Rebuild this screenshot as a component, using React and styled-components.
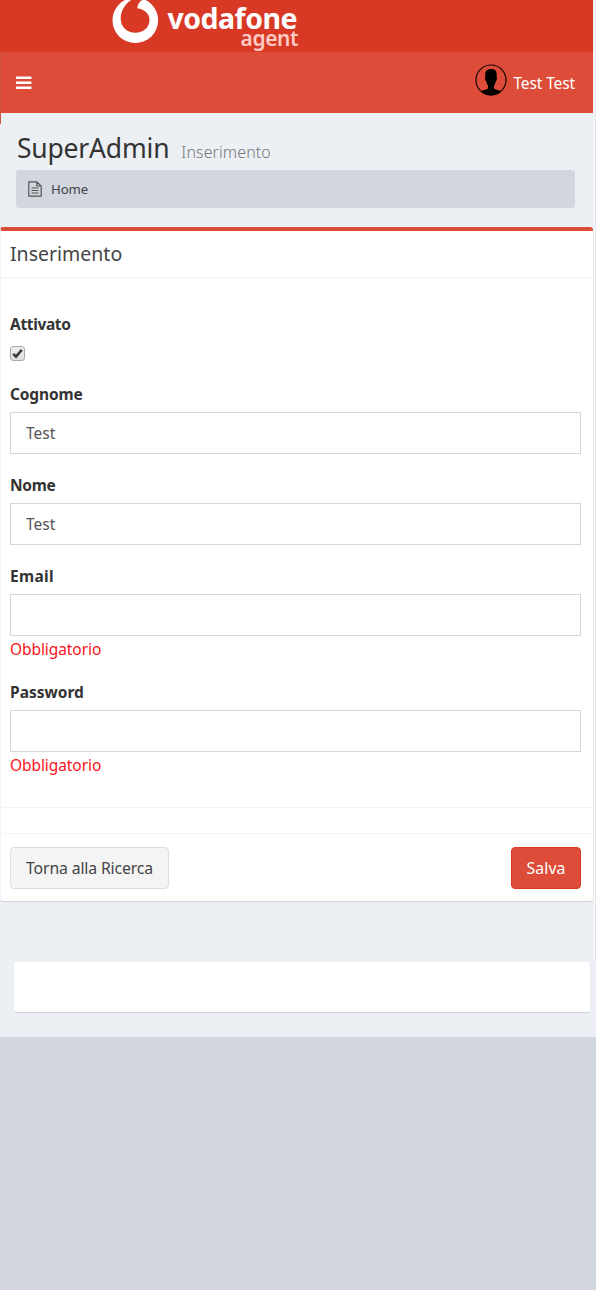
import React from "react";
import styled, { createGlobalStyle } from "styled-components";

const Global = createGlobalStyle`
  *, *::before, *::after { box-sizing: border-box; }
  body { margin: 0; background: #d2d6df; font-family: "Noto Sans", "Open Sans", sans-serif; color: #333; }
  h1, h2, p { margin: 0; font-weight: 400; }
  button, input { font-family: inherit; }
`;

const Page = styled.div`
  width: 596px;
  height: 1290px;
  overflow: hidden;
  background: #d2d6df;
`;
const Shell = styled.div`
  height: 1037px;
  background: #ecf0f5;
`;
const Main = styled.div`
  height: 962px;
  border-right: 1px solid #e2e5ea;
  box-shadow: inset -1px 0 0 #f8f9fb;
`;
const Header = styled.header`
  width: 593px;
  color: #fff;
`;
const LogoBar = styled.div`
  height: 52px;
  padding-left: 112px;
  display: flex;
  align-items: flex-start;
  gap: 6px;
  background: #d73925;
`;
const Brand = styled.div`
  display: flex;
  flex-direction: column;
  align-items: flex-end;
  width: 132px;
  padding-top: 1px;
  white-space: nowrap;
`;
const BrandName = styled.span`
  padding-right: 1px;
  font-size: 28.5px;
  line-height: 34px;
  font-weight: 700;
  letter-spacing: -0.5px;
`;
const BrandSub = styled.span`
  margin-top: -9px;
  font-size: 21px;
  line-height: 24px;
  font-weight: 600;
  letter-spacing: -0.45px;
  color: #ffc9c3;
`;
const NavBar = styled.nav`
  position: relative;
  height: 61px;
  padding: 0 18px 0 16px;
  display: flex;
  align-items: center;
  justify-content: space-between;
  background: #dd4b39;

  &::before {
    content: "";
    position: absolute;
    left: 0;
    top: 0;
    width: 1px;
    height: 72px;
    background: #d0564a;
  }
`;
const User = styled.div`
  display: flex;
  align-items: center;
  gap: 6px;
  margin-top: -6px;
`;
const UserName = styled.span`
  font-size: 15.5px;
  line-height: 20px;
  padding-top: 7px;
  letter-spacing: -0.12px;
`;
const Heading = styled.section`
  height: 114px;
  padding: 17px 20px 0 16px;
`;
const Title = styled.h1`
  display: flex;
  align-items: baseline;
  gap: 12px;
  height: 40px;
  padding-left: 1px;
  line-height: 37px;
  font-size: 26.5px;
  letter-spacing: -0.2px;
  color: #333;
`;
const Small = styled.small`
  font-size: 16px;
  font-weight: 300;
  letter-spacing: 0.1px;
  color: #777;
`;
const Breadcrumb = styled.div`
  height: 38px;
  display: flex;
  align-items: center;
  gap: 9px;
  padding-left: 12px;
  border-radius: 3px;
  background: #d2d6de;
  font-size: 13.2px;
  letter-spacing: -0.1px;
  color: #444;
`;
const Box = styled.form`
  width: 593px;
  height: 674px;
  margin: 0;
  border-top: 4px solid #dd4b39;
  border-left: 1px solid #f3f4f7;
  border-radius: 3px;
  background: #fff;
  box-shadow: 0 1px 1px rgba(0, 0, 0, 0.12);
`;
const BoxHeader = styled.h2`
  height: 47px;
  padding-left: 9px;
  border-bottom: 1px solid #f2f3f4;
  font-size: 19.5px;
  line-height: 46px;
  color: #444;
`;
const BoxBody = styled.div`
  height: 529px;
  padding: 34px 12px 0 9px;
`;
const Field = styled.div`
  height: ${(p) => p.$height}px;
`;
const Label = styled.label`
  display: block;
  height: 30px;
  line-height: 24px;
  font-size: 15.5px;
  font-weight: 700;
  letter-spacing: ${(p) => p.$track || 0}px;
`;
const Input = styled.input`
  display: block;
  width: 100%;
  height: 42px;
  padding: 0 15px;
  border: 1px solid #d2d6de;
  outline: 0;
  background: #fff;
  font-size: 15.5px;
  letter-spacing: 0;
  color: #555;
`;
const ErrorText = styled.p`
  height: 26px;
  line-height: 26px;
  font-size: 15.5px;
  letter-spacing: -0.08px;
  color: #fb1420;
`;
const Check = styled.span`
  display: flex;
  width: 15px;
  height: 15px;
  margin-top: 4px;
  border: 1px solid #aaa;
  border-radius: 3px;
  background: linear-gradient(#eee, #ddd);
`;
const Divider = styled.div`
  height: 27px;
  border-top: 1px solid #f4f4f4;
  border-bottom: 1px solid #f4f4f4;
`;
const BoxFooter = styled.div`
  display: flex;
  justify-content: space-between;
  padding: 13px 12px 0 9px;
`;
const Button = styled.button`
  width: ${(p) => (p.$primary ? 70 : 159)}px;
  height: 42px;
  padding: 0;
  border: 1px solid ${(p) => (p.$primary ? "#d73925" : "#ddd")};
  border-radius: 4px;
  background: ${(p) => (p.$primary ? "#dd4b39" : "#f4f4f4")};
  color: ${(p) => (p.$primary ? "#fff" : "#444")};
  font-size: 15.8px;
  letter-spacing: ${(p) => (p.$primary ? 0.15 : -0.15)}px;
  white-space: nowrap;
`;
const EmptyCard = styled.div`
  width: 576px;
  height: 50px;
  margin-left: 14px;
  border-radius: 2px;
  background: #fff;
  box-shadow: 0 1px 1px rgba(0, 0, 0, 0.12);
`;

const Mark = () => (
  <svg width="48" height="52" viewBox="0 0 48 52">
    <circle cx="23.3" cy="20.300" r="22.800" fill="#fff" />
    <path d="M32 -1C28 1 25.500 4 25.300 8.300C32 9.500 37.500 13 37.500 20C37.500 28 31 32.700 23.500 32.700C15 32.700 8.700 27 8.700 18.500C8.700 11 13 3 21 -1Z" fill="#d73925" />
  </svg>
);
const Menu = () => (
  <svg width="16" height="14" viewBox="0 0 16 14" fill="#fff">
    <rect y="0.5" width="15.5" height="2.6" rx="0.4" />
    <rect y="5.5" width="15.5" height="2.6" rx="0.4" />
    <rect y="10.5" width="15.5" height="2.6" rx="0.4" />
  </svg>
);
const Avatar = () => (
  <svg width="32" height="32" viewBox="0 0 32 32">
    <circle cx="16" cy="16" r="15" fill="none" stroke="#180504" strokeWidth="1.2" />
    <path d="M16 5C11 5 9.800 8 10.400 13C9.600 13 10.200 17 11.300 17.500C11.600 19.500 12.300 20.500 13 21.500V24.500C11 26 8 26 5.700 27.300A15 15 0 0 0 26.300 27.300C24 26 21 26 19 24.500V21.500C19.700 20.500 20.400 19.500 20.700 17.500C21.800 17 22.400 13 21.600 13C22.200 8 21 5 16 5Z" fill="#000" />
  </svg>
);
const FileIcon = () => (
  <svg width="14" height="16" viewBox="0 0 14 16" fill="none" stroke="#555" strokeWidth="1.2">
    <path d="M.8 .8H8.800L13.200 5V15.200H.8ZM8.800 .8V5H13M3.500 7H10.500M3.500 9.500H10.500M3.500 12H10.500" />
  </svg>
);
const Tick = () => (
  <svg width="13" height="13" viewBox="0 0 13 13">
    <path d="M2.200 6.800L5 9.600L10.800 2.800" fill="none" stroke="#3a3a3a" strokeWidth="2.600" />
  </svg>
);

export default function App() {
  return (
    <Page>
      <Global />
      <Shell>
        <Main>
          <Header>
            <LogoBar>
              <Mark />
              <Brand>
                <BrandName>vodafone</BrandName>
                <BrandSub>agent</BrandSub>
              </Brand>
            </LogoBar>
            <NavBar>
              <Menu />
              <User>
                <Avatar />
                <UserName>Test Test</UserName>
              </User>
            </NavBar>
          </Header>
          <Heading>
            <Title>SuperAdmin <Small>Inserimento</Small></Title>
            <Breadcrumb><FileIcon />Home</Breadcrumb>
          </Heading>
          <Box>
            <BoxHeader>Inserimento</BoxHeader>
            <BoxBody>
              <Field $height={70}>
                <Label $track={-0.35}>Attivato</Label>
                <Check role="checkbox" aria-checked="true"><Tick /></Check>
              </Field>
              <Field $height={91}>
                <Label $track={-0.15}>Cognome</Label>
                <Input defaultValue="Test" />
              </Field>
              <Field $height={91}>
                <Label $track={-0.3}>Nome</Label>
                <Input defaultValue="Test" />
              </Field>
              <Field $height={116}>
                <Label $track={0.3}>Email</Label>
                <Input />
                <ErrorText>Obbligatorio</ErrorText>
              </Field>
              <Field $height={116}>
                <Label>Password</Label>
                <Input type="password" />
                <ErrorText>Obbligatorio</ErrorText>
              </Field>
            </BoxBody>
            <Divider />
            <BoxFooter>
              <Button type="button">Torna alla Ricerca</Button>
              <Button type="button" $primary>Salva</Button>
            </BoxFooter>
          </Box>
        </Main>
        <EmptyCard />
      </Shell>
    </Page>
  );
}
